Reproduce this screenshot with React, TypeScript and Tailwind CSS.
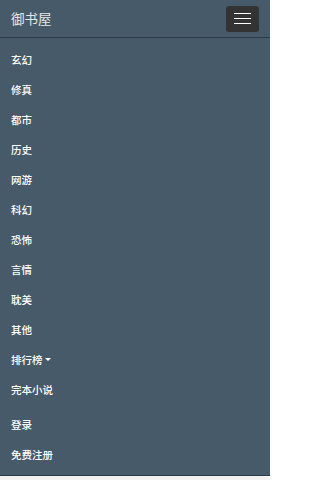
const MAIN_LINKS = ["玄幻", "修真", "都市", "历史", "网游", "科幻", "恐怖", "言情", "耽美", "其他"];

const FONT = { fontFamily: '"Noto Sans CJK SC", "Liberation Sans", sans-serif' };

function NavItem({ label, caret }: { label: string; caret?: boolean }) {
  return (
    <li>
      <a className="flex h-[30px] items-center px-[11px] text-[10.5px] font-medium leading-[15px] text-white">
        {label}
        {caret && (
          <span className="ml-[2px] inline-block h-0 w-0 border-x-[3px] border-t-[3px] border-x-transparent border-t-white" />
        )}
      </a>
    </li>
  );
}

export default function App() {
  return (
    <div className="min-h-[480px] w-[270px] bg-[#f2f2f2]" style={FONT}>
      <nav className="bg-[#465a69] border-b border-[#2c3b45]">
        {/* Header */}
        <div className="flex h-[37px] items-center justify-between pl-[11px] pr-[11px]">
          <span className="text-[13.5px] leading-none text-[#e6e6e6]">御书屋</span>
          <button className="flex h-[26px] w-[33px] flex-col items-center justify-center gap-[3.5px] rounded-[3px] bg-[#333333]">
            <span className="block h-[1.5px] w-[17px] bg-white" />
            <span className="block h-[1.5px] w-[17px] bg-white" />
            <span className="block h-[1.5px] w-[17px] bg-white" />
          </button>
        </div>

        {/* Collapsed menu */}
        <div className="border-t border-[#2c3b45] pb-[6px] pt-[6px]">
          <ul>
            {MAIN_LINKS.map((l) => (
              <NavItem key={l} label={l} />
            ))}
            <NavItem label="排行榜" caret />
            <NavItem label="完本小说" />
          </ul>
          <ul className="mt-[5px]">
            <NavItem label="登录" />
            <NavItem label="免费注册" />
          </ul>
        </div>
      </nav>
    </div>
  );
}
